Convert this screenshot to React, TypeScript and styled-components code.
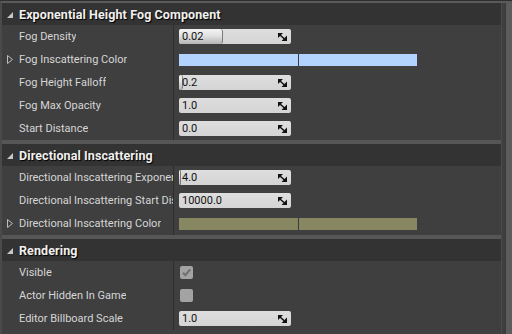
import styled, { createGlobalStyle } from 'styled-components'

const GlobalStyle = createGlobalStyle`
  html, body {
    margin: 0;
    padding: 0;
    background: #2b2b2b;
  }
  body {
    font-family: Roboto, "Open Sans", "Liberation Sans", sans-serif;
  }
`

type Prop =
  | { kind: 'number'; label: string; value: string; handle?: number }
  | { kind: 'color'; label: string; color: string }
  | { kind: 'check'; label: string; checked: boolean }

interface SectionData {
  title: string;
  props: Prop[];
}

const sections: SectionData[] = [
  {
    title: 'Exponential Height Fog Component',
    props: [
      { kind: 'number', label: 'Fog Density', value: '0.02', handle: 44 },
      { kind: 'color', label: 'Fog Inscattering Color', color: '#b2d3ff' },
      { kind: 'number', label: 'Fog Height Falloff', value: '0.2', handle: 4 },
      { kind: 'number', label: 'Fog Max Opacity', value: '1.0' },
      { kind: 'number', label: 'Start Distance', value: '0.0' },
    ],
  },
  {
    title: 'Directional Inscattering',
    props: [
      { kind: 'number', label: 'Directional Inscattering Exponent', value: '4.0', handle: 2 },
      { kind: 'number', label: 'Directional Inscattering Start Distance', value: '10000.0' },
      { kind: 'color', label: 'Directional Inscattering Color', color: '#878762' },
    ],
  },
  {
    title: 'Rendering',
    props: [
      { kind: 'check', label: 'Visible', checked: true },
      { kind: 'check', label: 'Actor Hidden In Game', checked: false },
      { kind: 'number', label: 'Editor Billboard Scale', value: '1.0' },
    ],
  },
]

export default function App() {
  return (
    <>
      <GlobalStyle />
      <Frame>
        <Panel>
          <Details>
            {sections.map((s, i) => (
              <Section key={s.title} last={i === sections.length - 1}>
                <Header>
                  <svg width="6" height="6" viewBox="0 0 6 6">
                    <polygon points="6,0 6,6 0,6" fill="#c6c6c6" />
                  </svg>
                  <HeaderTitle>{s.title}</HeaderTitle>
                </Header>
                {s.props.map(p => (
                  <Row key={p.label}>
                    <Label>
                      {p.kind === 'color' && (
                        <Expander width="6" height="9" viewBox="0 0 6 9">
                          <polygon points="0.5,0.5 5.5,4.5 0.5,8.5" fill="none" stroke="#bdbdbd" strokeWidth="1" />
                        </Expander>
                      )}
                      <LabelText>{p.label}</LabelText>
                    </Label>
                    <Divider />
                    <Value>{renderValue(p)}</Value>
                  </Row>
                ))}
              </Section>
            ))}
          </Details>
          <RightEdge />
          <Scrollbar />
        </Panel>
      </Frame>
    </>
  )
}

function renderValue(p: Prop) {
  if (p.kind === 'color') {
    return (
      <ColorBar color={p.color}>
        <ColorHalf />
        <ColorHalf />
      </ColorBar>
    )
  }
  if (p.kind === 'check') {
    return (
      <CheckBox>
        {p.checked && (
          <svg width="11" height="11" viewBox="0 0 11 11">
            <path d="M2 5.8 L4.4 8.2 L9.2 2.4" fill="none" stroke="#707070" strokeWidth="2.2" />
          </svg>
        )}
      </CheckBox>
    )
  }
  return (
    <NumberBox>
      {p.handle ? <Handle style={{ width: p.handle }} /> : null}
      <NumberText>{p.value}</NumberText>
      <ResizeIcon width="9" height="8" viewBox="0 0 9 8">
        <polygon points="0,0 5,0 0,5" fill="#111" />
        <line x1="2" y1="2" x2="6.5" y2="6" stroke="#111" strokeWidth="1.5" />
        <polygon points="9,8 9,2.5 3.5,8" fill="#111" />
      </ResizeIcon>
    </NumberBox>
  )
}

const Frame = styled.div`
  width: 512px;
  height: 334px;
  overflow: hidden;
  background: #2f2f2f;
  padding-top: 1px;
  box-sizing: border-box;
`

const Panel = styled.div`
  display: flex;
  height: 333px;
  border-top: 2px solid #5a5a5a;
  border-left: 2px solid #4a4a4a;
  box-sizing: border-box;
  background: #3f3f3f;
`

const Details = styled.div`
  flex: 1;
  display: flex;
  flex-direction: column;
  min-width: 0;
`

const RightEdge = styled.div`
  width: 1px;
  background: #4a4a4a;
`

const Scrollbar = styled.div`
  width: 6px;
  margin-left: 3px;
  background: #5c5c5c;
  border-left: 1px solid #3a3a3a;
`

const Section = styled.div<{ last?: boolean }>`
  display: flex;
  flex-direction: column;
  border-bottom: ${p => (p.last ? 'none' : '4px solid #565656')};
`

const Header = styled.div`
  height: 22px;
  display: flex;
  align-items: center;
  gap: 6px;
  padding-left: 5px;
  background: #333333;
  svg {
    margin-top: 2px;
  }
`

const HeaderTitle = styled.span`
  color: #f0f0f0;
  font-size: 12.5px;
  font-weight: 700;
  text-shadow: 1px 1px 1px #000;
  letter-spacing: 0.1px;
`

const Row = styled.div`
  height: 23px;
  display: grid;
  grid-template-columns: 171px 1px 1fr;
  align-items: stretch;
`

const Label = styled.div`
  display: flex;
  align-items: center;
  padding-left: 17px;
  position: relative;
  overflow: hidden;
  min-width: 0;
`

const LabelText = styled.span`
  display: block;
  min-width: 0;
  overflow: hidden;
  color: #d6d6d6;
  font-size: 11px;
  white-space: nowrap;
`

const Expander = styled.svg`
  position: absolute;
  left: 5px;
  top: 7px;
`

const Divider = styled.div`
  background: #2e2e2e;
`

const Value = styled.div`
  display: flex;
  align-items: center;
  padding-left: 5px;
`

const NumberBox = styled.div`
  position: relative;
  width: 112px;
  height: 15px;
  border-radius: 2px;
  background: linear-gradient(#dedede, #d4d4d4);
  display: flex;
  align-items: center;
  overflow: hidden;
`

const Handle = styled.div`
  position: absolute;
  left: 0;
  top: 0;
  bottom: 0;
  border-radius: 2px 3px 3px 2px;
  background: linear-gradient(#f4f4f4, #e2e2e2 45%, #b4b4b4);
  border-right: 1px solid #7a7a7a;
  box-sizing: border-box;
`

const NumberText = styled.span`
  position: relative;
  padding-left: 3px;
  color: #111;
  font-size: 11px;
`

const ResizeIcon = styled.svg`
  position: absolute;
  right: 4px;
  top: 4px;
`

const ColorBar = styled.div<{ color: string }>`
  width: 238px;
  height: 12px;
  display: flex;
  gap: 1px;
  background: #3a3a3a;
  div {
    background: ${p => p.color};
  }
`

const ColorHalf = styled.div`
  flex: 1;
`

const CheckBox = styled.div`
  width: 13px;
  height: 13px;
  margin-left: 1px;
  border-radius: 2px;
  background: #a3a3a3;
  display: flex;
  align-items: center;
  justify-content: center;
`
